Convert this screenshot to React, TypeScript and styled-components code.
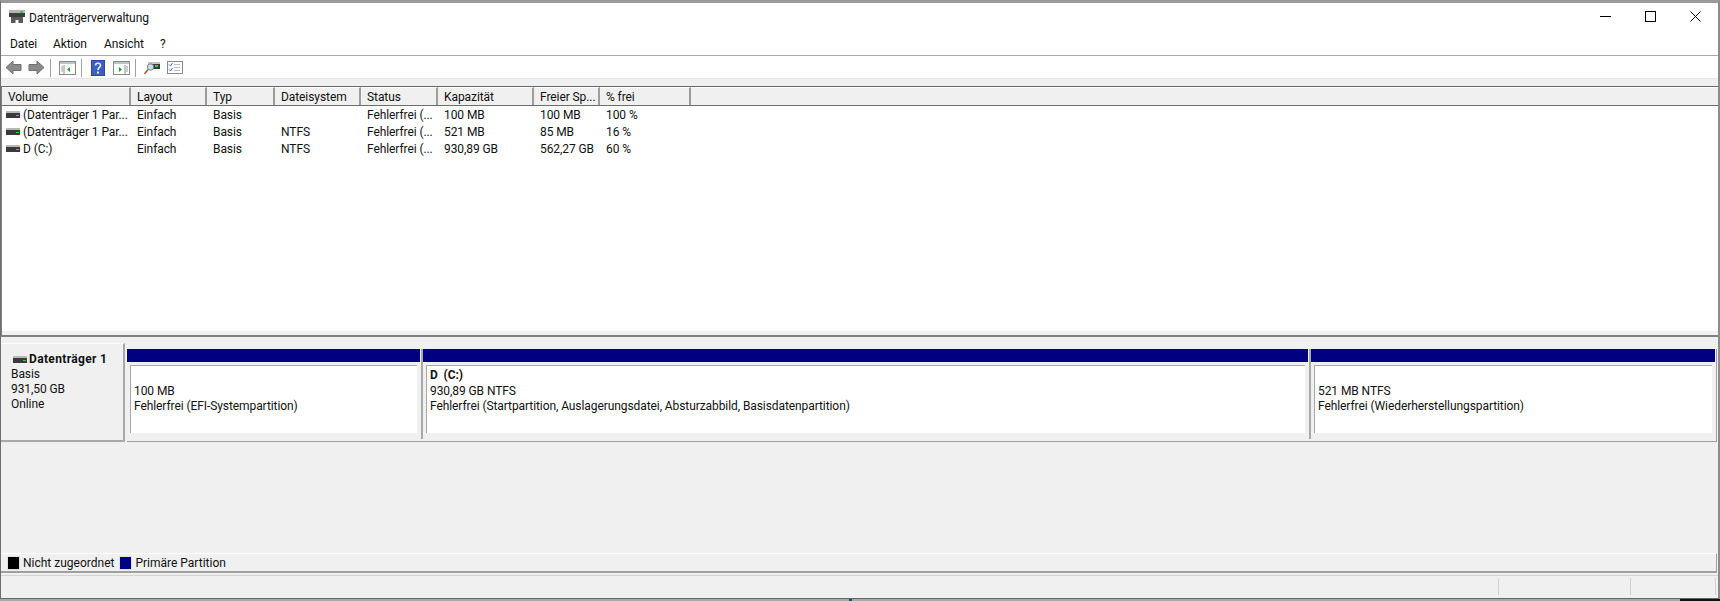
import styled, { createGlobalStyle } from "styled-components";

const Global = createGlobalStyle`
  html, body {
    margin: 0;
    padding: 0;
    background: #a8a8a8;
    overflow: hidden;
  }
`;

const COLUMNS = "129px 76px 68px 86px 77px 96px 66px 91px 1fr";

const Window = styled.div`
  box-sizing: border-box;
  width: 1720px;
  height: 599px;
  border-top: 3px solid #9a9a9a;
  border-left: 1px solid #6e6e6e;
  border-right: 2px solid #8c8c8c;
  border-bottom: 1px solid #666;
  background: #fff;
  display: flex;
  flex-direction: column;
  font-family: Roboto, "Noto Sans", sans-serif;
  font-size: 12px;
  letter-spacing: -0.08px;
  color: #111;
`;

const TitleBar = styled.div`
  height: 27px;
  display: flex;
  align-items: center;
  padding-left: 8px;
`;

const TitleText = styled.span`
  flex: 1;
  margin: 2px 0 0 4px;
`;

const Caption = styled.div`
  width: 45px;
  display: flex;
  justify-content: center;
`;

const MenuBar = styled.div`
  display: flex;
  align-items: center;
  padding: 2px 0 0 9px;
  height: 23px;
  border-bottom: 1px solid #aaa;
`;

const MenuItem = styled.span`
  width: ${(p: { $width: number }) => p.$width}px;
`;

const Toolbar = styled.div`
  height: 21px;
  display: flex;
  align-items: center;
  padding: 1px 0 0 4px;
  border-bottom: 1px solid #e6e6e6;
`;

const ToolButton = styled.span`
  display: flex;
  flex-shrink: 0;
  margin-right: ${(p: { $gap?: number }) => p.$gap ?? 7}px;
`;

const Separator = styled.span`
  width: 1px;
  height: 18px;
  background: #a0a0a0;
  margin-right: ${(p: { $gap?: number }) => p.$gap ?? 8}px;
`;

const Strip = styled.div`
  height: 7px;
  background: #f0f0f0;
`;

const List = styled.div`
  height: 251px;
  box-sizing: border-box;
  background: #fff;
  border-top: 1px solid #696969;
  border-bottom: 2px solid #808080;
  border-left: 1px solid #808080;
  display: flex;
  flex-direction: column;
`;

const Header = styled.div`
  display: grid;
  grid-template-columns: ${COLUMNS};
  height: 18px;
  flex-shrink: 0;
  background: #f0f0f0;
  border-bottom: 1px solid #6e6e6e;
`;

const HeaderCell = styled.div`
  display: flex;
  align-items: center;
  padding-left: 6px;
  border-top: 1px solid #fff;
  border-right: 2px solid #9d9d9d;
  white-space: nowrap;
  &:last-child {
    border-right: none;
  }
`;

const Rows = styled.div`
  flex: 1;
`;

const ListFoot = styled.div`
  height: 4px;
  background: #f0f0f0;
`;

const Row = styled.div`
  display: grid;
  grid-template-columns: ${COLUMNS};
  height: 17px;
  align-items: center;
`;

const Cell = styled.div`
  padding-left: 6px;
  white-space: nowrap;
  overflow: hidden;
`;

const VolumeCell = styled(Cell)`
  display: flex;
  align-items: center;
  gap: 3px;
  padding-left: 4px;
`;

const Pane = styled.div`
  flex: 1;
  background: #f0f0f0;
  display: flex;
  flex-direction: column;
  padding-top: 6px;
`;

const DiskRow = styled.div`
  height: 210px;
  flex-shrink: 0;
  display: flex;
  align-items: flex-start;
  gap: 2px;
`;

const DiskLabel = styled.div`
  box-sizing: border-box;
  width: 124px;
  height: 99px;
  padding: 8px 0 0 10px;
  background: #f0f0f0;
  border-top: 1px solid #fff;
  border-right: 2px solid #a8a8a8;
  border-bottom: 2px solid #a8a8a8;
  line-height: 15px;
`;

const DiskName = styled.div`
  display: flex;
  align-items: center;
  gap: 2px;
  font-weight: 700;
  letter-spacing: 0.35px;
  margin-left: 2px;
`;

const Partitions = styled.div`
  display: grid;
  grid-template-columns: 296px 888px 1fr;
  width: 1589px;
  height: 90px;
  margin-top: 6px;
  padding-bottom: 2px;
  border-bottom: 1px solid #a0a0a0;
  border-right: 1px solid #a0a0a0;
`;

const Partition = styled.div`
  display: flex;
  flex-direction: column;
  border-right: 2px solid #a8a8a8;
  padding-right: 1px;
  &:last-child {
    border-right: none;
  }
`;

const Bar = styled.div`
  height: 13px;
  background: #000080;
  margin-bottom: 3px;
`;

const PartitionBody = styled.div`
  flex: 1;
  background: #fff;
  margin: 0 3px 6px 3px;
  border-top: 1px solid #a8a8a8;
  border-left: 1px solid #a8a8a8;
  padding: 2px 0 0 3px;
  line-height: 15.5px;
`;

const PartitionName = styled.div`
  font-weight: 700;
  height: 15.5px;
  white-space: pre;
`;

const Legend = styled.div`
  box-sizing: border-box;
  height: 20px;
  flex-shrink: 0;
  display: flex;
  align-items: center;
  padding: 1px 0 0 6px;
  letter-spacing: 0;
  border-top: 1px solid #fff;
  border-bottom: 2px solid #a0a0a0;
  border-right: 1px solid #a0a0a0;
  margin-right: 1px;
`;

const Swatch = styled.span`
  box-sizing: border-box;
  width: 13px;
  height: 14px;
  margin-right: 3px;
  background: ${(p: { $color: string }) => p.$color};
  border: 1px solid #e0e0e0;
`;

const LegendText = styled.span`
  margin-right: 5px;
`;

const StatusBar = styled.div`
  height: 22px;
  flex-shrink: 0;
  box-sizing: border-box;
  margin-top: 2px;
  background: #f0f0f0;
  border-top: 1px solid #d4d4d4;
  display: grid;
  grid-template-columns: 1498px 132px 85px;
`;

const StatusCell = styled.div`
  margin: 2px 0;
  border-right: 1px solid #d0d0d0;
`;

const BottomEdge = styled.div`
  height: 2px;
  display: flex;
  background: #a8a8a8;
`;

const EdgeTick = styled.span`
  width: 3px;
  margin-left: 849px;
  background: #2a4a66;
`;

const EdgeDark = styled.span`
  width: 40px;
  margin-left: auto;
  background: #111;
`;

const IconSvg = styled.svg`
  flex-shrink: 0;
  display: block;
`;

const DiskIcon = () => (
  <IconSvg width="14" height="7" viewBox="0 0 14 7">
    <rect x="0" y="0" width="14" height="2" fill="#b9b9b9" />
    <rect x="0" y="2" width="14" height="5" fill="#3a3a3a" />
    <rect x="10" y="4" width="3" height="1" fill="#35d04a" />
  </IconSvg>
);

const BackIcon = ({ flip }: { flip?: boolean }) => (
  <IconSvg width="17" height="15" viewBox="0 0 17 15" style={flip ? { transform: "scaleX(-1)" } : undefined}>
    <path d="M1 7.5 8 1v3.5h8v6H8V14z" fill="#8a8a8a" stroke="#707070" />
  </IconSvg>
);

const PaneIcon = ({ flip }: { flip?: boolean }) => (
  <IconSvg width="17" height="14" viewBox="0 0 17 14">
    <rect x="0.5" y="0.5" width="16" height="13" fill="#fff" stroke="#8a8a8a" />
    <rect x="1" y="1" width="15" height="2" fill="#b9c4cc" />
    <path d={flip ? "M5 4v9" : "M12 4v9"} stroke="#8a8a8a" />
    <path d={flip ? "M2 6h2M2 8h2M2 10h2" : "M13 6h2M13 8h2M13 10h2"} stroke="#8fa0b0" />
    <path d={flip ? "M11 6v5L8 8.5z" : "M6 6v5l3-2.5z"} fill="#1f9e2c" />
  </IconSvg>
);

const HelpIcon = () => (
  <IconSvg width="14" height="16" viewBox="0 0 14 16">
    <rect width="14" height="16" fill="#2b48a8" />
    <rect x="1" y="1" width="12" height="14" fill="#3f5fc0" />
    <path d="M4.5 5.5C4.5 2.5 9.5 2.5 9.5 5.5 9.5 7.5 7 7.5 7 10" fill="none" stroke="#e8ecfa" strokeWidth="1.6" />
    <rect x="6" y="11.5" width="2" height="2" fill="#e8ecfa" />
  </IconSvg>
);

const ConnectIcon = () => (
  <IconSvg width="16" height="15" viewBox="0 0 16 15">
    <rect x="4" y="3" width="12" height="6" fill="#3b3b3b" />
    <rect x="4" y="2" width="12" height="2" fill="#c4c4c4" />
    <rect x="11" y="5" width="3" height="2" fill="#3ad04a" />
    <circle cx="6.5" cy="7" r="3.2" fill="#bfe0ef" stroke="#808080" />
    <path d="M4 9.5 0.5 14" stroke="#9a6a3a" strokeWidth="1.6" />
  </IconSvg>
);

const CheckListIcon = () => (
  <IconSvg width="16" height="13" viewBox="0 0 16 13">
    <rect x="0.5" y="0.5" width="15" height="12" fill="#fff" stroke="#8a8a8a" />
    <path d="M2 3.5 3.5 5 5.5 2M2 8.5 3.5 10 5.5 7" fill="none" stroke="#2b6fd0" />
    <path d="M7 3.5h6M7 6.5h6M7 9.5h6" stroke="#bdbdbd" />
  </IconSvg>
);

const AppIcon = () => (
  <IconSvg width="16" height="16" viewBox="0 0 16 16">
    <rect x="0" y="1" width="16" height="4" fill="#b5b5b5" />
    <rect x="0" y="4" width="16" height="4" fill="#3f3f3f" />
    <rect x="11" y="2" width="3" height="2" fill="#3ad04a" />
    <path d="M2 8h12v6H9.5v-3h-3v3H2z" fill="#5a5a5a" />
  </IconSvg>
);

const rows = [
  ["(Datenträger 1 Par...", "Einfach", "Basis", "", "Fehlerfrei (...", "100 MB", "100 MB", "100 %"],
  ["(Datenträger 1 Par...", "Einfach", "Basis", "NTFS", "Fehlerfrei (...", "521 MB", "85 MB", "16 %"],
  ["D (C:)", "Einfach", "Basis", "NTFS", "Fehlerfrei (...", "930,89 GB", "562,27 GB", "60 %"],
];

const headers = ["Volume", "Layout", "Typ", "Dateisystem", "Status", "Kapazität", "Freier Sp...", "% frei", ""];

const partitions = [
  { name: "", size: "100 MB", status: "Fehlerfrei (EFI-Systempartition)" },
  { name: "D  (C:)", size: "930,89 GB NTFS", status: "Fehlerfrei (Startpartition, Auslagerungsdatei, Absturzabbild, Basisdatenpartition)" },
  { name: "", size: "521 MB NTFS", status: "Fehlerfrei (Wiederherstellungspartition)" },
];

export default function App() {
  return (
    <>
      <Global />
      <Window>
        <TitleBar>
          <AppIcon />
          <TitleText>Datenträgerverwaltung</TitleText>
          <Caption>
            <svg width="11" height="11" viewBox="0 0 11 11"><path d="M0 5.5h11" stroke="#000" /></svg>
          </Caption>
          <Caption>
            <svg width="11" height="11" viewBox="0 0 11 11"><rect x="0.5" y="0.5" width="10" height="10" fill="none" stroke="#000" /></svg>
          </Caption>
          <Caption>
            <svg width="11" height="11" viewBox="0 0 11 11"><path d="M0.5 0.5l10 10M10.5 0.5l-10 10" stroke="#000" /></svg>
          </Caption>
        </TitleBar>
        <MenuBar>
          <MenuItem $width={43}>Datei</MenuItem>
          <MenuItem $width={51}>Aktion</MenuItem>
          <MenuItem $width={56}>Ansicht</MenuItem>
          <MenuItem $width={10}>?</MenuItem>
        </MenuBar>
        <Toolbar>
          <ToolButton $gap={6}><BackIcon /></ToolButton>
          <ToolButton $gap={5}><BackIcon flip /></ToolButton>
          <Separator />
          <ToolButton $gap={5}><PaneIcon flip /></ToolButton>
          <Separator $gap={9} />
          <ToolButton $gap={8}><HelpIcon /></ToolButton>
          <ToolButton $gap={5}><PaneIcon /></ToolButton>
          <Separator />
          <ToolButton $gap={7}><ConnectIcon /></ToolButton>
          <ToolButton><CheckListIcon /></ToolButton>
        </Toolbar>
        <Strip />
        <List>
          <Header>
            {headers.map((h, i) => (
              <HeaderCell key={i}>{h}</HeaderCell>
            ))}
          </Header>
          <Rows>
            {rows.map((r, i) => (
              <Row key={i}>
                <VolumeCell><DiskIcon />{r[0]}</VolumeCell>
                {r.slice(1).map((c, j) => (
                  <Cell key={j}>{c}</Cell>
                ))}
              </Row>
            ))}
          </Rows>
          <ListFoot />
        </List>
        <Pane>
          <DiskRow>
            <DiskLabel>
              <DiskName><DiskIcon />Datenträger 1</DiskName>
              <div>Basis</div>
              <div>931,50 GB</div>
              <div>Online</div>
            </DiskLabel>
            <Partitions>
              {partitions.map((p, i) => (
                <Partition key={i}>
                  <Bar />
                  <PartitionBody>
                    <PartitionName>{p.name}</PartitionName>
                    <div>{p.size}</div>
                    <div>{p.status}</div>
                  </PartitionBody>
                </Partition>
              ))}
            </Partitions>
          </DiskRow>
          <Legend>
            <Swatch $color="#000" />
            <LegendText>Nicht zugeordnet</LegendText>
            <Swatch $color="#000080" />
            <LegendText>Primäre Partition</LegendText>
          </Legend>
          <StatusBar>
            <StatusCell />
            <StatusCell />
            <StatusCell />
          </StatusBar>
        </Pane>
      </Window>
      <BottomEdge>
        <EdgeTick />
        <EdgeDark />
      </BottomEdge>
    </>
  );
}
